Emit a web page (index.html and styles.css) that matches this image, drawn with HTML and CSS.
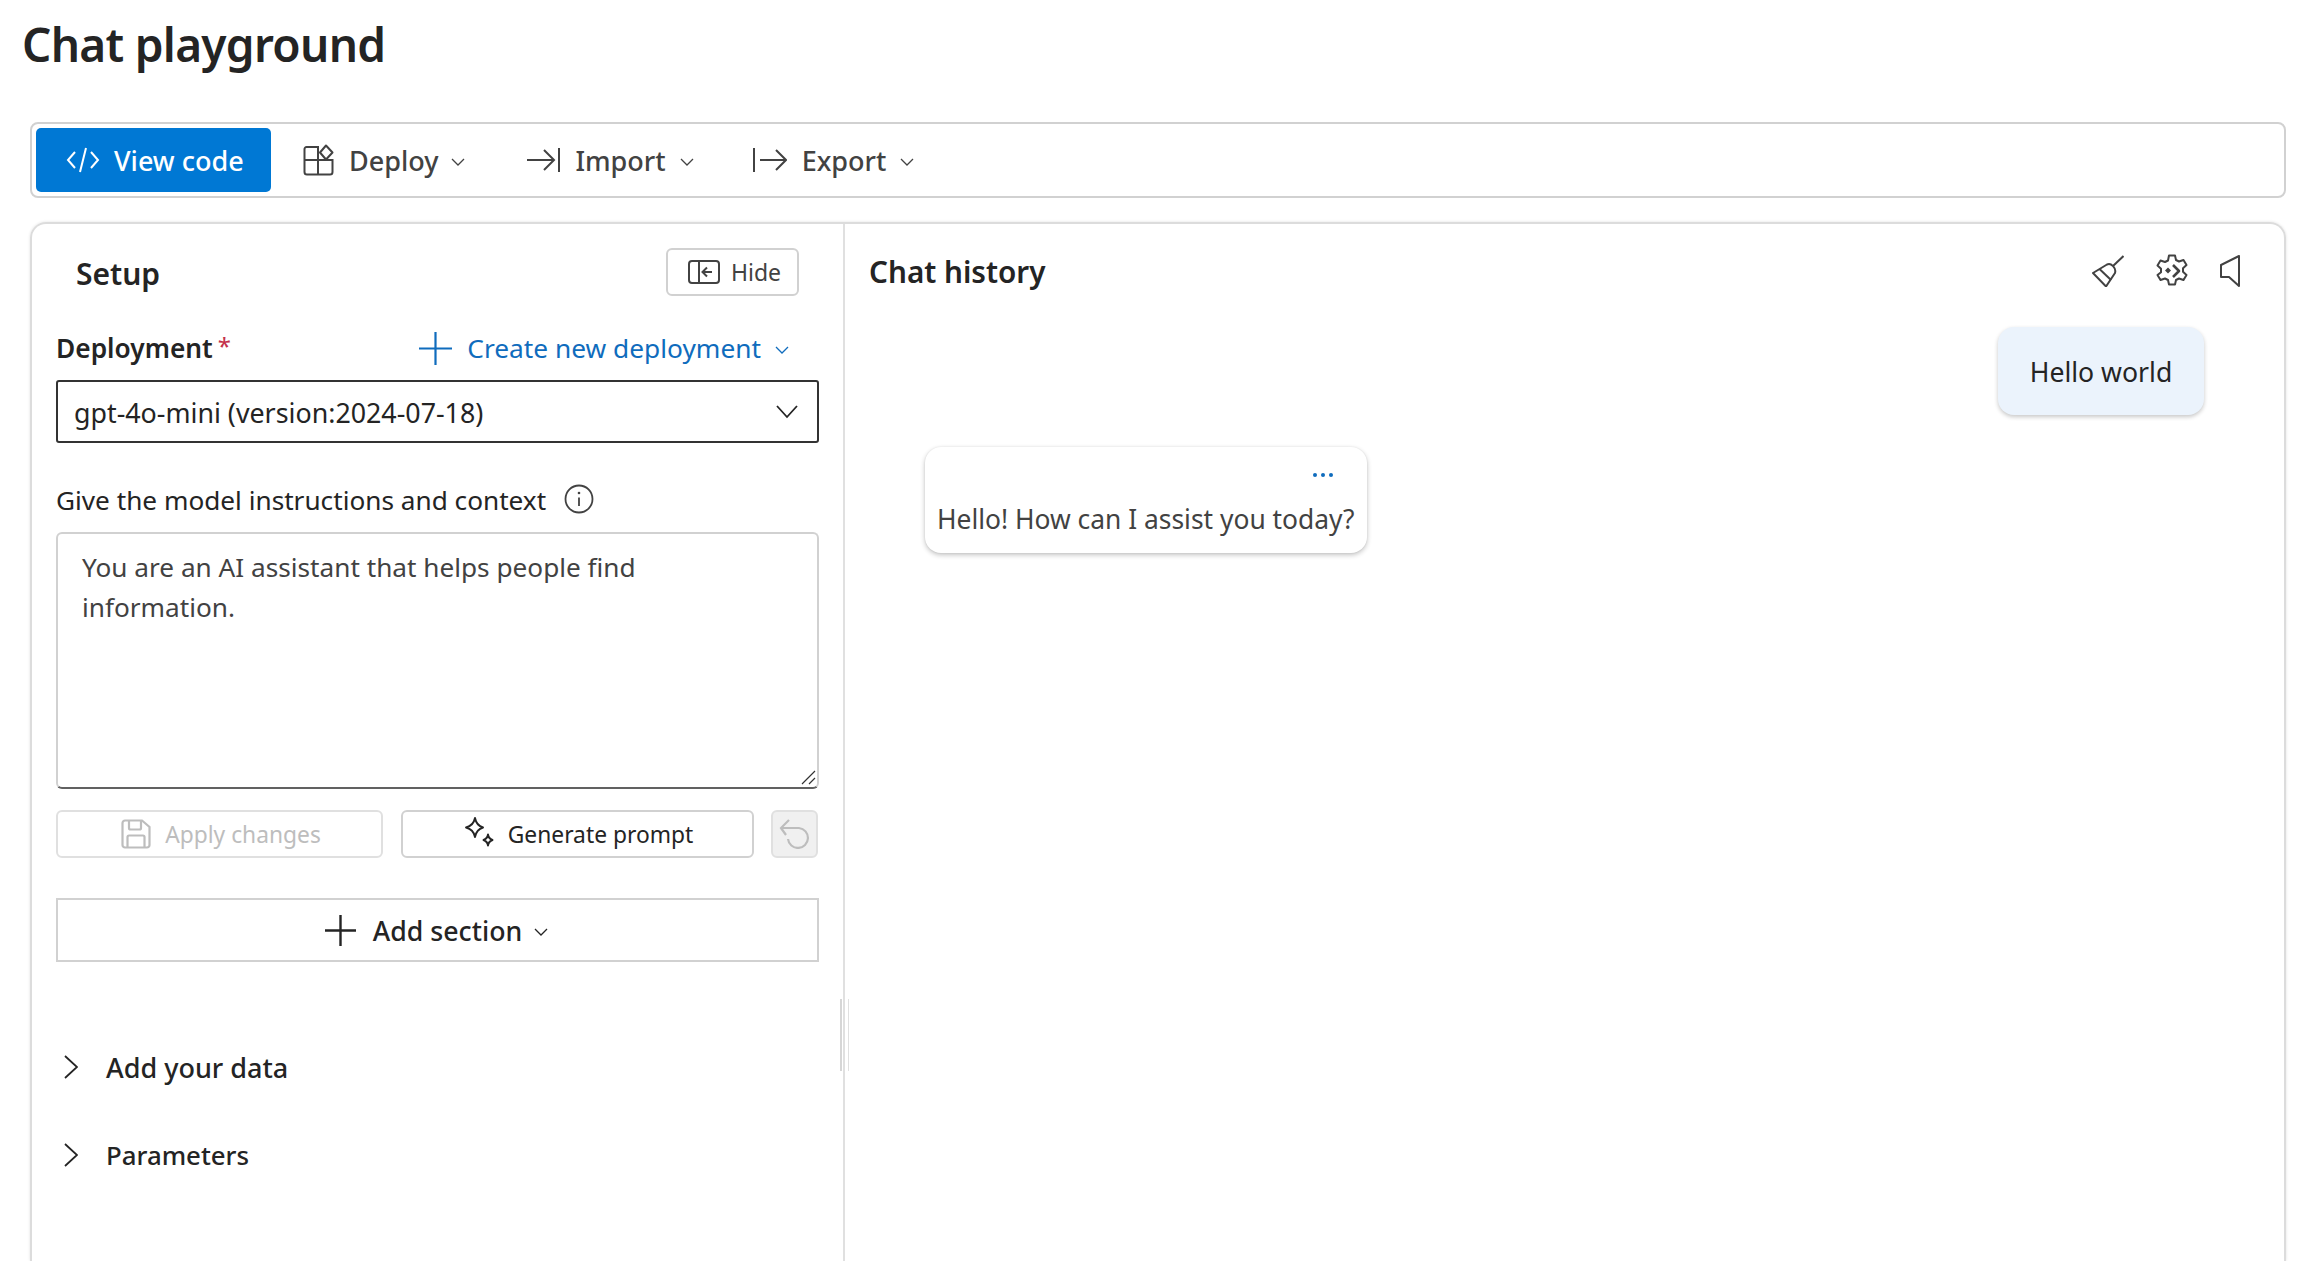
FILE: index.html
```html
<!DOCTYPE html>
<html lang="en">
<head>
<meta charset="utf-8">
<title>Chat playground</title>
<link rel="stylesheet" href="styles.css">
</head>
<body>
<div class="page">
  <h1 class="title">Chat playground</h1>
  <div class="toolbar">
    <button class="tb-btn primary">
      <svg class="ic-code" viewBox="0 0 34 28" fill="none" stroke="currentColor" stroke-width="2"><path d="M9 6 2 14l7 8M25 6l7 8-7 8M20 2l-6 24"/></svg>
      <span>View code</span>
    </button>
    <button class="tb-btn deploy">
      <svg class="ic-deploy" viewBox="0 0 32 32" fill="none" stroke="currentColor" stroke-width="2"><path d="M15 3H3.500A2 2 0 0 0 1.500 5v23a2.500 2.500 0 0 0 2.500 2.500h23a2.500 2.500 0 0 0 2.500-2.500V16H15V3ZM15 16H1.500M15 16v14.500"/><path d="m23 1.500 6.500 7-6.500 7-6-7z" stroke-linejoin="round"/></svg>
      <span>Deploy</span>
      <svg class="chev" viewBox="0 0 14 8" fill="none" stroke="currentColor" stroke-width="1.300"><path d="m1 1 6 6 6-6"/></svg>
    </button>
    <button class="tb-btn import">
      <svg class="ic-arrow" viewBox="0 0 34 28" fill="none" stroke="currentColor" stroke-width="2"><path d="M1 14h26M18 4l10 10-10 10M33 2v24"/></svg>
      <span>Import</span>
      <svg class="chev" viewBox="0 0 14 8" fill="none" stroke="currentColor" stroke-width="1.300"><path d="m1 1 6 6 6-6"/></svg>
    </button>
    <button class="tb-btn export">
      <svg class="ic-arrow" viewBox="0 0 34 28" fill="none" stroke="currentColor" stroke-width="2"><path d="M1 2v24M7 14h26M23 4l10 10-10 10"/></svg>
      <span>Export</span>
      <svg class="chev" viewBox="0 0 14 8" fill="none" stroke="currentColor" stroke-width="1.300"><path d="m1 1 6 6 6-6"/></svg>
    </button>
  </div>

  <main class="panel">
    <section class="setup">
      <div class="setup-head">
        <h2 class="setup-title">Setup</h2>
        <button class="hide-btn">
          <svg class="ic-hide" viewBox="0 0 32 24" fill="none" stroke="currentColor" stroke-width="2"><rect x="1" y="1" width="30" height="22" rx="3"/><path d="M11 1v22M24 12H15M19 7.500 14.500 12l4.500 4.500"/></svg>
          <span>Hide</span>
        </button>
      </div>

      <div class="deploy-row">
        <div class="field-label">Deployment<span class="req">*</span></div>
        <div class="create">
          <svg class="ic-plus" viewBox="0 0 33 33" fill="none" stroke="currentColor" stroke-width="2.200"><path d="M16.500 0v33M0 16.500h33"/></svg>
          <span>Create new deployment</span>
          <svg class="chev" viewBox="0 0 14 8" fill="none" stroke="currentColor" stroke-width="1.300"><path d="m1 1 6 6 6-6"/></svg>
        </div>
      </div>
      <div class="select">
        <span>gpt-4o-mini (version:2024-07-18)</span>
        <svg class="sel-chev" viewBox="0 0 22 14" fill="none" stroke="currentColor" stroke-width="1.800"><path d="m1 1 10 11L21 1"/></svg>
      </div>

      <div class="instr-label">
        <span>Give the model instructions and context</span>
        <svg class="ic-info" viewBox="0 0 30 30" fill="none" stroke="currentColor" stroke-width="1.800"><circle cx="15" cy="15" r="13.500"/><path d="M15 13.500V22"/><circle cx="15" cy="9" r="1.300" fill="currentColor" stroke="none"/></svg>
      </div>
      <div class="textarea">
        You are an AI assistant that helps people find information.
        <svg class="grip" viewBox="0 0 16 16" fill="none" stroke="#333" stroke-width="1.200"><path d="M2 15 15 2M9 15l6-6"/></svg>
      </div>

      <div class="actions">
        <button class="act apply">
          <svg class="ic-save" viewBox="0 0 30 30" fill="none" stroke="currentColor" stroke-width="2.200"><path d="M4 1.500h17L28.500 8v18a2.500 2.500 0 0 1-2.500 2.500H4A2.500 2.500 0 0 1 1.500 26V4A2.500 2.500 0 0 1 4 1.500Z"/><path d="M8 2v7a1.500 1.500 0 0 0 1.500 1.500h9A1.500 1.500 0 0 0 20 9V2M6.500 28V18a1.500 1.500 0 0 1 1.500-1.500h14a1.500 1.500 0 0 1 1.500 1.500v10"/></svg>
          <span>Apply changes</span>
        </button>
        <button class="act generate">
          <svg class="ic-spark" viewBox="0 0 30 30" fill="none" stroke="currentColor" stroke-width="1.900" stroke-linejoin="round"><path d="M11 1c1 5 3 8 8 9.500-5 1.500-7 4.500-8 9.500-1-5-3-8-9-9.500C8 9 10 6 11 1Z"/><path d="M24 17.500c.5 3 1.500 4.500 4.500 5.500-3 1-4 2.500-4.500 5.500-.5-3-1.500-4.500-4.500-5.500 3-1 4-2.500 4.500-5.500Z"/></svg>
          <span>Generate prompt</span>
        </button>
        <button class="act undo" aria-label="Undo">
          <svg class="ic-undo" viewBox="0 0 32 30" fill="none" stroke="currentColor" stroke-width="2.200"><path d="M2 9h18a10 10 0 1 1-11 11"/><path d="M10 1 2 9l5 7"/></svg>
        </button>
      </div>

      <button class="add-section">
        <svg class="ic-plus-sm" viewBox="0 0 31 31" fill="none" stroke="currentColor" stroke-width="2.400"><path d="M15.500 0v31M0 15.500h31"/></svg>
        <span>Add section</span>
        <svg class="chev" viewBox="0 0 14 8" fill="none" stroke="currentColor" stroke-width="1.300"><path d="m1 1 6 6 6-6"/></svg>
      </button>

      <div class="accordion first">
        <svg class="acc-chev" viewBox="0 0 14 24" fill="none" stroke="currentColor" stroke-width="1.800"><path d="m1 1 12 11L1 23"/></svg>
        <span>Add your data</span>
      </div>
      <div class="accordion params">
        <svg class="acc-chev" viewBox="0 0 14 24" fill="none" stroke="currentColor" stroke-width="1.800"><path d="m1 1 12 11L1 23"/></svg>
        <span>Parameters</span>
      </div>
      <div class="splitter"></div>
    </section>

    <section class="chat">
      <div class="chat-head">
        <h2 class="chat-title">Chat history</h2>
        <div class="chat-tools">
          <svg class="ic-brush" viewBox="0 0 32 32" fill="none" stroke="currentColor" stroke-width="2" stroke-linejoin="round"><path d="M31.500 1 21 11"/><path d="M1 18 15 9.500c4-2 9.500 3.500 8 8.500L14 31.500Z"/><path d="M7.500 14 19 25"/></svg>
          <svg class="ic-gear" viewBox="0 0 34 34" fill="none" stroke="currentColor" stroke-width="2" stroke-linejoin="round"><path d="M14 1.500h6l1 4.500 3 1.500 4.500-1.500 3 5-3.500 3.200v3.600l3.500 3.200-3 5-4.500-1.500-3 1.500-1 4.500h-6l-1-4.500-3-1.500-4.500 1.500-3-5L6 18.300v-3.600L2.500 11.500l3-5L10 8l3-1.500Z"/><path d="m18 11 6 6-6 6" stroke-width="2.600"/><path d="m13 13.500-3 3 3 3 3-3z" fill="currentColor" stroke="none"/></svg>
          <svg class="ic-speaker" viewBox="0 0 20 32" fill="none" stroke="currentColor" stroke-width="2" stroke-linejoin="round"><path d="M19 1v30L9 22H1V10z"/></svg>
        </div>
      </div>
      <div class="msg-user-row"><div class="msg-user">Hello world</div></div>
      <div class="msg-bot">
        <div class="dots"><i></i><i></i><i></i></div>
        <div class="bot-text">Hello! How can I assist you today?</div>
      </div>
    </section>
  </main>
</div>
</body>
</html>
```

FILE: styles.css
```css
* { box-sizing: border-box; }
html, body { margin: 0; height: 100%; overflow: hidden; background: #fff; }
body { font-family: "Noto Sans", "Open Sans", sans-serif; color: #242424; }
button { font: inherit; color: inherit; background: none; border: 0; padding: 0; }
h1, h2 { margin: 0; }

.page { height: 1261px; display: flex; flex-direction: column; padding: 0 14px 0 30px; }

.title { font-size: 46px; font-weight: 600; line-height: 62px; margin: 13px 0 0 -8px; letter-spacing: -0.7px; color: #242424; }

.toolbar { height: 76px; margin-top: 47px; border: 2px solid #d1d1d1; border-radius: 8px; display: flex; align-items: center; padding: 0 4px; flex: none; }
.tb-btn { display: flex; align-items: center; font-size: 27px; font-weight: 500; color: #424242; white-space: nowrap; }
.tb-btn.primary { width: 235px; height: 64px; background: #0078d4; color: #fff; border-radius: 5px; padding-left: 30px; gap: 14px; }
.tb-btn.deploy { margin-left: 32px; gap: 14px; }
.tb-btn.import { margin-left: 61px; gap: 15px; }
.tb-btn.export { margin-left: 59px; gap: 15px; }
.tb-btn .chev { margin-left: -1px; }
.ic-code { width: 34px; height: 28px; }
.ic-deploy { width: 32px; height: 32px; }
.ic-arrow { width: 34px; height: 28px; }
.chev { width: 14px; height: 8px; flex: none; margin-top: 4px; }

.panel { flex: 1; margin-top: 24px; display: grid; grid-template-columns: 813px 1fr; border: 2px solid #dcdcdc; border-bottom: 0; border-radius: 16px 16px 0 0; box-shadow: 0 0 3px rgba(0,0,0,.12); min-height: 0; }

.setup { position: relative; border-right: 2px solid #e0e0e0; padding: 0 24px 0 24px; }
.setup-head { height: 72px; margin-top: 13px; display: flex; align-items: center; justify-content: space-between; padding: 0 20px 0 20px; }
.setup-title { font-size: 30px; font-weight: 600; color: #242424; }
.hide-btn { width: 133px; height: 48px; margin-top: -2px; border: 2px solid #d1d1d1; border-radius: 6px; display: flex; align-items: center; gap: 11px; padding-left: 20px; font-size: 23px; color: #424242; }
.ic-hide { width: 32px; height: 24px; flex: none; }

.deploy-row { display: flex; justify-content: space-between; align-items: center; height: 36px; margin-top: 21px; padding-right: 30px; }
.field-label { font-size: 26.3px; font-weight: 600; color: #242424; }
.req { color: #c4314b; margin-left: 5px; font-weight: 400; font-size: 24px; position: relative; top: -3px; }
.create { display: flex; align-items: center; color: #0f6cbd; font-size: 26.3px; }
.ic-plus { width: 33px; height: 33px; margin-right: 15px; }
.create .chev { margin-left: 14px; }

.select { height: 63px; margin-top: 14px; border: 2px solid #333; border-radius: 3px; display: flex; align-items: center; justify-content: space-between; padding: 2px 19px 0 16px; font-size: 26.8px; color: #242424; }
.sel-chev { width: 22px; height: 14px; margin-top: -2px; }

.instr-label { display: flex; align-items: center; gap: 18px; height: 40px; margin-top: 37px; font-size: 26.2px; color: #242424; }
.ic-info { width: 30px; height: 30px; color: #424242; margin-top: -2px; }

.textarea { position: relative; height: 257px; margin-top: 12px; border: 2px solid #d1d1d1; border-bottom-color: #616161; border-radius: 6px; padding: 13px 100px 0 24px; font-size: 26.2px; line-height: 40px; color: #424242; }
.grip { position: absolute; right: 1px; bottom: 2px; width: 16px; height: 16px; }

.actions { display: flex; margin-top: 21px; height: 48px; }
.act { height: 48px; border-radius: 6px; display: flex; align-items: center; justify-content: center; font-size: 22.8px; }
.apply { width: 327px; padding-left: 3px; border: 2px solid #e0e0e0; color: #bdbdbd; gap: 14px; }
.generate { width: 353px; padding-left: 2px; margin-left: 18px; border: 2px solid #d1d1d1; color: #242424; gap: 14px; }
.undo { width: 47px; margin-left: 17px; border: 2px solid #e0e0e0; background: #f0f0f0; color: #bdbdbd; }
.ic-save { width: 30px; height: 30px; }
.ic-spark { width: 30px; height: 30px; margin-top: -4px; }
.ic-undo { width: 32px; height: 30px; }

.add-section { width: 100%; height: 64px; margin-top: 40px; padding-right: 2px; border: 2px solid #d1d1d1; display: flex; align-items: center; justify-content: center; font-size: 26.7px; font-weight: 500; color: #242424; }
.ic-plus-sm { width: 31px; height: 31px; margin-right: 17px; }
.add-section .chev { margin-left: 12px; }

.accordion { display: flex; align-items: center; height: 48px; margin-top: 40px; padding-left: 8px; font-size: 27px; font-weight: 500; color: #242424; }
.accordion.first { margin-top: 81px; }
.accordion.params { font-size: 25.8px; }
.acc-chev { width: 14px; height: 24px; margin-right: 28px; flex: none; }

.splitter { position: absolute; right: -6px; top: 775px; width: 9px; height: 72px; border-left: 2px solid #d6d6d6; border-right: 1px solid #e0e0e0; }

.chat { padding: 0 44px 0 24px; min-width: 0; }
.chat-head { display: flex; align-items: center; justify-content: space-between; height: 64px; margin-top: 15px; }
.chat-title { font-size: 29.7px; font-weight: 600; color: #242424; }
.chat-tools { display: flex; align-items: center; gap: 31px; }
.chat-tools svg { color: #424242; display: block; }
.ic-brush { width: 32px; height: 32px; }
.ic-gear { width: 34px; height: 34px; }
.ic-speaker { width: 20px; height: 32px; }

.msg-user-row { display: flex; justify-content: flex-end; margin-top: 24px; padding-right: 36px; }
.msg-user { width: 206px; height: 88px; padding-top: 2px; background: #ebf3fc; border-radius: 16px; box-shadow: 0 2px 4px rgba(0,0,0,.22); display: flex; align-items: center; justify-content: center; font-size: 26.6px; color: #242424; }
.msg-bot { width: 442px; height: 106px; margin: 32px 0 0 56px; padding: 0 11px 0 12px; background: #fff; border-radius: 16px; box-shadow: 0 2px 5px rgba(0,0,0,.24), 0 0 2px rgba(0,0,0,.08); }
.dots { display: flex; justify-content: flex-end; gap: 4px; height: 56px; padding: 26px 23px 0 0; }
.dots i { width: 4px; height: 4px; background: #0f6cbd; border-radius: 50%; display: block; }
.bot-text { font-size: 26.4px; line-height: 32px; color: #424242; white-space: nowrap; }
```
